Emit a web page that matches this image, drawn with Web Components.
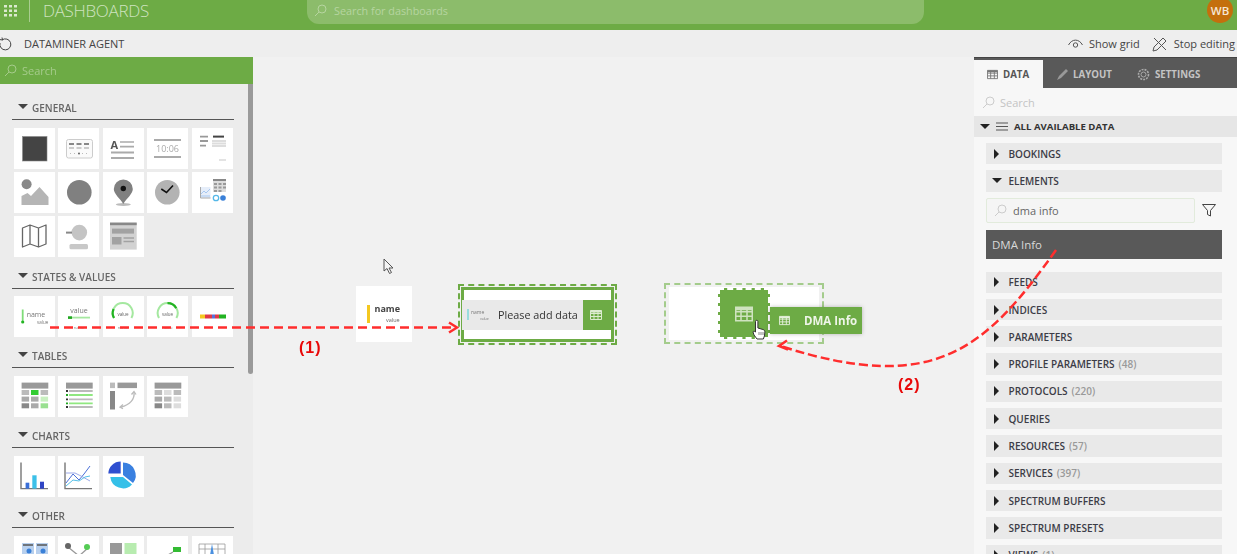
<!DOCTYPE html>
<html>
<head>
<meta charset="utf-8">
<title>Dashboards</title>
<style>
  html, body { margin: 0; padding: 0; height: 100%; overflow: hidden; }
  body { font-family: "Open Sans", "Noto Sans", sans-serif; color: #444; background: #f1f1f1; }
</style>
</head>
<body>
<dash-app>
  <dash-topbar slot="top"></dash-topbar>
  <dash-toolbar slot="tools"></dash-toolbar>
  <dash-palette slot="left">
    <palette-section heading="GENERAL">
      <palette-tile><svg viewBox="0 0 41 41"><rect x="8.5" y="8.5" width="24.5" height="24.5" fill="#444" stroke="#888" stroke-width=".6"/></svg></palette-tile>
      <palette-tile><svg viewBox="0 0 41 41"><rect x="8.5" y="11.5" width="26" height="18.5" rx="2" fill="#fafafa" stroke="#ccc"/><path d="M11 16h5M18.500 16h5M26 16h5" stroke="#888" stroke-width="2"/><path d="M11 20h5M18.500 20h5M26 20h5" stroke="#ccc" stroke-width="2"/><path d="M12 25.500h19" stroke="#bbb" stroke-dasharray="1 3"/><circle cx="21" cy="25.500" r="1" fill="#666"/></svg></palette-tile>
      <palette-tile><svg viewBox="0 0 41 41"><text x="7.500" y="21" font-family="Open Sans" font-size="11" font-weight="700" fill="#555">A</text><path d="M17 14h14M17 18.600h14" stroke="#aaa" stroke-width="1.600"/><path d="M8 24.600h23M8 30h23" stroke="#aaa" stroke-width="2"/></svg></palette-tile>
      <palette-tile><svg viewBox="0 0 41 41"><path d="M7 12h27M7 29h27" stroke="#aaa" stroke-width="2"/><text x="20.500" y="24" text-anchor="middle" font-family="Open Sans" font-size="9" fill="#aaa">10:06</text></svg></palette-tile>
      <palette-tile><svg viewBox="0 0 41 41"><path d="M8 8.600h8M8 13h8M8 17.600h6" stroke="#999" stroke-width="1.800"/><path d="M21 8.600h11" stroke="#444" stroke-width="2"/><path d="M20 13h14M20 15.500h14M20 18h14" stroke="#ddd" stroke-width="1.800"/><path d="M27 32h7" stroke="#ddd" stroke-width="1.600"/></svg></palette-tile>
      <palette-tile><svg viewBox="0 0 41 41"><circle cx="12.600" cy="12.300" r="5" fill="#888"/><path d="M7.500 33V24l6-3 3.500 3 8.500-9 9 10v8z" fill="#b5b5b5"/></svg></palette-tile>
      <palette-tile><svg viewBox="0 0 41 41"><circle cx="21.300" cy="20.300" r="12.300" fill="#808080"/></svg></palette-tile>
      <palette-tile><svg viewBox="0 0 41 41"><ellipse cx="20.300" cy="32.500" rx="7.500" ry="1.500" fill="#bbb"/><path d="M20.300 7.500a9.500 9.500 0 0 1 9.500 9.500c0 5-6 9-9.500 15-3.500-6-9.500-10-9.500-15a9.500 9.500 0 0 1 9.500-9.500z" fill="#808080"/><circle cx="20.300" cy="16.500" r="2.700" fill="#111"/></svg></palette-tile>
      <palette-tile><svg viewBox="0 0 41 41"><circle cx="20.300" cy="20.300" r="12.300" fill="#b3b3b3"/><path d="M14.300 17l5.200 3.500 6.500-7" fill="none" stroke="#111" stroke-width="1.600"/></svg></palette-tile>
      <palette-tile><svg viewBox="0 0 41 41"><rect x="8.500" y="15" width="10" height="11" fill="#e6eefa"/><rect x="21" y="7" width="13" height="13" fill="#ddd"/><path d="M21 8h13" stroke="#888" stroke-width="2"/><path d="M22 12h3M26.500 12h3M31 12h3M22 15.500h3M26.500 15.500h3M31 15.500h3M22 19h3M26.500 19h3" stroke="#999" stroke-width="2"/><path d="M8.500 15v11h10" fill="none" stroke="#aaa"/><path d="M9 22l3-3 2 2 4-4M9 24h9" fill="none" stroke="#a8c8f0"/><circle cx="24" cy="26" r="2.700" fill="none" stroke="#55b8e8" stroke-width="1.300"/><circle cx="31" cy="26" r="2.800" fill="#3a80d8"/></svg></palette-tile>
      <palette-tile><svg viewBox="0 0 41 41"><path d="M8.500 12l7.500-3 8.500 3 7.500-3v19l-7.500 3-8.500-3-7.500 3z M16 9v19M24.500 12v19" fill="#fff" stroke="#666" stroke-width="1.300" stroke-linejoin="round"/></svg></palette-tile>
      <palette-tile><svg viewBox="0 0 41 41"><circle cx="21.300" cy="16.600" r="7.800" fill="#c4c4c4"/><path d="M8 16.600h6" stroke="#888" stroke-width="2"/><rect x="11.500" y="28" width="18.500" height="5.200" rx="1.500" fill="#c8c8c8"/></svg></palette-tile>
      <palette-tile><svg viewBox="0 0 41 41"><rect x="7" y="6.600" width="26.700" height="27" fill="#d2d2d2"/><rect x="7" y="6.600" width="26.700" height="2.600" fill="#888"/><rect x="9" y="12.600" width="22" height="5" fill="#a2a2a2"/><rect x="9" y="21" width="9.500" height="7.500" fill="#a2a2a2"/><path d="M20.500 22h10.500M20.500 25.500h10.500" stroke="#a2a2a2" stroke-width="1.500"/></svg></palette-tile>
    </palette-section>
    <palette-section heading="STATES &amp; VALUES">
      <palette-tile><svg viewBox="0 0 41 41"><path d="M8.700 13.500v12" stroke="#7fdc78" stroke-width="1.800"/><circle cx="8.700" cy="26" r="1.600" fill="#22b322"/><text x="12.700" y="21" font-family="Open Sans" font-size="7" fill="#777">name</text><text x="23" y="27.500" font-family="Open Sans" font-size="4.500" fill="#777">value</text></svg></palette-tile>
      <palette-tile><svg viewBox="0 0 41 41"><text x="21" y="17" text-anchor="middle" font-family="Open Sans" font-size="7" fill="#777">value</text><path d="M10 21.600h22" stroke="#a5e8a0" stroke-width="1.800"/><path d="M10 21.600h4" stroke="#22a722" stroke-width="2.600"/><text x="21" y="33" text-anchor="middle" font-family="Open Sans" font-size="4" fill="#888">name</text></svg></palette-tile>
      <palette-tile><svg viewBox="0 0 41 41"><g transform="translate(0 -3.500)" fill="none"><path d="M11 25.500a10 10 0 1 1 17.400 0" stroke="#a5e8a0" stroke-width="2"/><path d="M11 25.500a10 10 0 0 1-.4-9" stroke="#22b322" stroke-width="2.200"/></g><text x="20" y="20" text-anchor="middle" font-family="Open Sans" font-size="4.500" fill="#666">value</text><text x="20" y="33" text-anchor="middle" font-family="Open Sans" font-size="4" fill="#888">name</text></svg></palette-tile>
      <palette-tile><svg viewBox="0 0 41 41"><g transform="translate(0 -3.500)" fill="none"><path d="M12 25.500a10 10 0 1 1 17.400 0" stroke="#a5e8a0" stroke-width="2"/><path d="M20.500 10.700a10 10 0 0 1 8.700 5" stroke="#22b322" stroke-width="2.200"/></g><text x="20.500" y="20" text-anchor="middle" font-family="Open Sans" font-size="4.500" fill="#666">value</text><text x="20.500" y="33" text-anchor="middle" font-family="Open Sans" font-size="4" fill="#888">name</text></svg></palette-tile>
      <palette-tile><svg viewBox="0 0 41 41"><rect x="8" y="18.500" width="5" height="4" fill="#f4c820"/><rect x="13" y="18.500" width="7" height="4" fill="#e03a48"/><rect x="20" y="18.500" width="3" height="4" fill="#5a70d8"/><rect x="23" y="18.500" width="4" height="4" fill="#e03a48"/><rect x="27" y="18.500" width="7" height="4" fill="#22b322"/></svg></palette-tile>
    </palette-section>
    <palette-section heading="TABLES">
      <palette-tile><svg viewBox="0 0 41 41"><rect x="7.600" y="6.600" width="26.700" height="6" fill="#999"/><g fill="#bbb"><rect x="7.600" y="14" width="7.500" height="5"/><rect x="17" y="14" width="7.500" height="5" fill="#33cc33"/><rect x="26.600" y="14" width="7.500" height="5"/><rect x="7.600" y="20.600" width="7.500" height="5" fill="#aaa"/><rect x="17" y="20.600" width="7.500" height="5" fill="#aaa"/><rect x="26.600" y="20.600" width="7.500" height="5" fill="#c8f0c0"/><rect x="7.600" y="27.300" width="7.500" height="5" fill="#888"/><rect x="17" y="27.300" width="7.500" height="5" fill="#aaa"/><rect x="26.600" y="27.300" width="7.500" height="5" fill="#99e090"/></g></svg></palette-tile>
      <palette-tile><svg viewBox="0 0 41 41"><rect x="8" y="6.600" width="26.700" height="6" fill="#999"/><path d="M11 15h23.700M11 23.300h23.700M11 31h23.700" stroke="#bbb" stroke-width="1.800"/><path d="M11 19h23.700M11 27.300h23.700" stroke="#90e880" stroke-width="1.800"/><path d="M8 15h2M8 23.300h2M8 31h2" stroke="#333" stroke-width="1.800"/><path d="M8 19h2M8 27.300h2" stroke="#22a722" stroke-width="1.800"/></svg></palette-tile>
      <palette-tile><svg viewBox="0 0 41 41"><rect x="7" y="6.600" width="5" height="5.500" fill="#bbb"/><rect x="14.500" y="6.600" width="19.500" height="5.500" fill="#999"/><rect x="7" y="15" width="5" height="18.500" fill="#888"/><path d="M31 16c1 7-4 13-13 15" fill="none" stroke="#bbb" stroke-width="1.300"/><path d="M28.500 18.500l2.500-3 2 3M20 28.500l-3 2.700 3 1.500" fill="none" stroke="#bbb" stroke-width="1.300"/></svg></palette-tile>
      <palette-tile><svg viewBox="0 0 41 41"><rect x="7.600" y="6.600" width="26.700" height="6" fill="#999"/><g fill="#bbb"><rect x="7.600" y="14" width="7.500" height="5"/><rect x="17" y="14" width="7.500" height="5" fill="#ddd"/><rect x="26.600" y="14" width="7.500" height="5"/><rect x="7.600" y="20.600" width="7.500" height="5" fill="#aaa"/><rect x="17" y="20.600" width="7.500" height="5"/><rect x="26.600" y="20.600" width="7.500" height="5" fill="#ddd"/><rect x="7.600" y="27.300" width="7.500" height="5" fill="#888"/><rect x="17" y="27.300" width="7.500" height="5"/><rect x="26.600" y="27.300" width="7.500" height="5" fill="#ddd"/></g></svg></palette-tile>
    </palette-section>
    <palette-section heading="CHARTS">
      <palette-tile><svg viewBox="0 0 41 41"><path d="M7 6.600v26h27" fill="none" stroke="#777" stroke-width="1.400"/><rect x="11.600" y="26.700" width="3.700" height="6" fill="#3a6fd8"/><rect x="18.300" y="19.300" width="4.300" height="13.300" fill="#3cc0e8"/><rect x="26" y="25.700" width="4" height="7" fill="#2f45c4"/></svg></palette-tile>
      <palette-tile><svg viewBox="0 0 41 41"><path d="M7 6.600v26h27" fill="none" stroke="#777" stroke-width="1.400"/><path d="M8 27l7-9 6 6 5-6 6-8" fill="none" stroke="#4a6fd8"/><path d="M8 17h9l6 3 9 5" fill="none" stroke="#9aa8e8"/><path d="M8 30l7-6 6 1 6-4 5-1" fill="none" stroke="#55c0e8"/></svg></palette-tile>
      <palette-tile><svg viewBox="0 0 41 41"><path d="M5.300 17.600a12.400 12.400 0 0 1 12.400-12v12z" fill="#2f4fd0"/><path d="M20 6.600a12.700 12.700 0 0 1 10 20.500l-10-8z" fill="#3a80e0"/><path d="M29 28.500a12.700 12.700 0 0 1-21.700-7.500h12.700z" fill="#35c0e8"/></svg></palette-tile>
    </palette-section>
    <palette-section heading="OTHER">
      <palette-tile><svg viewBox="0 0 41 41"><rect x="8" y="7" width="12" height="18" fill="#b8d0ee"/><rect x="22" y="7" width="12" height="18" fill="#b8d0ee"/><path d="M9 9h10M23 9h10" stroke="#555" stroke-width="1.500"/><circle cx="15" cy="15" r="2.500" fill="#3a80d8"/><circle cx="29" cy="15" r="2.500" fill="#3a80d8"/></svg></palette-tile>
      <palette-tile><svg viewBox="0 0 41 41"><path d="M10 11l11 9 9-8" fill="none" stroke="#999" stroke-width="1.300"/><circle cx="10" cy="10" r="3" fill="#666"/><circle cx="29" cy="11" r="3" fill="#55cc55"/></svg></palette-tile>
      <palette-tile><svg viewBox="0 0 41 41"><rect x="7" y="7" width="12" height="12" fill="#999"/><rect x="21.500" y="7" width="12" height="12" fill="#b8ecb0"/></svg></palette-tile>
      <palette-tile><svg viewBox="0 0 41 41"><rect x="26" y="11" width="8" height="5" fill="#33bb33"/><path d="M26 16l-5 3" stroke="#999" stroke-width="1.300"/></svg></palette-tile>
      <palette-tile><svg viewBox="0 0 41 41"><path d="M7 8h26M7 13h26M13 8v11M26 8v11M7 8v11M33 8v11" stroke="#999" stroke-width=".8" fill="none"/><path d="M18 19l2-11 2 11z" fill="#4a90e0"/></svg></palette-tile>
    </palette-section>
  </dash-palette>
  <dash-canvas slot="center"></dash-canvas>
  <dash-sidepanel slot="right">
    <data-row label="BOOKINGS"></data-row>
    <data-row label="ELEMENTS" open></data-row>
    <element-filter value="dma info"></element-filter>
    <data-row label="FEEDS"></data-row>
    <data-row label="INDICES"></data-row>
    <data-row label="PARAMETERS"></data-row>
    <data-row label="PROFILE PARAMETERS" count="(48)"></data-row>
    <data-row label="PROTOCOLS" count="(220)"></data-row>
    <data-row label="QUERIES"></data-row>
    <data-row label="RESOURCES" count="(57)"></data-row>
    <data-row label="SERVICES" count="(397)"></data-row>
    <data-row label="SPECTRUM BUFFERS"></data-row>
    <data-row label="SPECTRUM PRESETS"></data-row>
    <data-row label="VIEWS" count="(1)"></data-row>
  </dash-sidepanel>
  <flow-annotations slot="over"></flow-annotations>
</dash-app>

<script>
const GRID_ICON = `<svg width="14" height="14" viewBox="0 0 14 14" fill="#dbe9cf"><path d="M0 1h3v2.500H0zM5 1h3v2.500H5zM10 1h3v2.500h-3zM0 5.500h3V8H0zM5 5.500h3V8H5zM10 5.500h3V8h-3zM0 10h3v2.500H0zM5 10h3v2.500H5zM10 10h3v2.500h-3z"/></svg>`;
const LENS_ICON = color => `<svg width="13" height="13" viewBox="0 0 13 13" fill="none" stroke="${color}" stroke-width="1"><circle cx="8" cy="5" r="4"/><path d="M5 8l-4 4"/></svg>`;
const TABLE_ICON = (color, size) => `<svg width="${size}" height="${size}" viewBox="0 0 12 12" fill="none" stroke="${color}" stroke-width="1"><path d="M.5 1.500h11v9H.5z"/><path d="M.5 4.500h11M.5 7.500h11M4 1.500v9M8 1.500v9"/><path d="M.5 2.500h11" stroke-width="2"/></svg>`;

class DashApp extends HTMLElement {
    constructor() {
        super();
        this.attachShadow({ mode: "open" }).innerHTML = `
          <style>
            :host { display: block; position: relative; width: 1237px; height: 554px; overflow: hidden; filter: blur(.35px); }
            .main { display: flex; height: 497px; }
            .over { position: absolute; inset: 0; pointer-events: none; }
          </style>
          <slot name="top"></slot>
          <slot name="tools"></slot>
          <div class="main">
            <slot name="left"></slot>
            <slot name="center"></slot>
            <slot name="right"></slot>
          </div>
          <div class="over"><slot name="over"></slot></div>
        `;
    }
}

class DashTopbar extends HTMLElement {
    constructor() {
        super();
        this.attachShadow({ mode: "open" }).innerHTML = `
          <style>
            :host { display: flex; height: 30px; background: #6dab45; box-sizing: border-box; }
            .grid { width: 30px; height: 22px; padding-left: 4px; box-sizing: border-box; border-right: 1px solid #a9cd90; display: flex; align-items: center; }
            .title { width: 263px; padding-left: 13px; box-sizing: border-box; height: 22px; line-height: 21px; font-size: 17px; font-weight: 300; color: #cfe3c0; letter-spacing: -.3px; }
            .search { width: 617px; height: 24px; margin-left: 14px; border-radius: 0 0 12px 12px; background: #8cbc6b; display: flex; align-items: center; gap: 7px; padding: 0 0 4px 7px; box-sizing: border-box; font-size: 10.800px; color: #b6d5a0; }
            .avatar { margin: -3px 0 0 283px; width: 26px; height: 26px; border-radius: 50%; background: #c46f0c; color: #f5e6d5; font-size: 11.500px; font-weight: 600; display: flex; align-items: center; justify-content: center; }
          </style>
          <div class="grid">${GRID_ICON}</div>
          <div class="title">DASHBOARDS</div>
          <div class="search">${LENS_ICON("#b6d5a0")}<span>Search for dashboards</span></div>
          <div class="avatar">WB</div>
        `;
    }
}

class DashToolbar extends HTMLElement {
    constructor() {
        super();
        this.attachShadow({ mode: "open" }).innerHTML = `
          <style>
            :host { display: flex; align-items: center; height: 27px; background: #eee; font-size: 11px; color: #444; }
            .refresh { margin-left: -1px; width: 25px; display: flex; }
            .name { flex: 1; }
            .act { display: flex; align-items: center; gap: 6px; margin-right: 12px; }
            .act:last-child { margin-right: 2px; }
          </style>
          <span class="refresh"><svg width="13" height="14" viewBox="0 0 13 14" fill="none" stroke="#444" stroke-width="1"><path d="M3 3a5.500 5.500 0 1 1-2 3"/><path d="M.5 2.500L3.500 3 3 .5"/></svg></span>
          <span class="name">DATAMINER AGENT</span>
          <span class="act"><svg width="15" height="10" viewBox="0 0 15 10" fill="none" stroke="#555"><path d="M.5 6c3.500-6.500 10.500-6.500 14 0"/><circle cx="7.500" cy="6" r="2.200"/></svg>Show grid</span>
          <span class="act"><svg width="16" height="16" viewBox="0 0 16 16" fill="none" stroke="#555"><path d="M1 15l1-4 9-9 3 3-9 9z"/><path d="M2 2l12 12"/></svg>Stop editing</span>
        `;
    }
}

class DashPalette extends HTMLElement {
    constructor() {
        super();
        this.attachShadow({ mode: "open" }).innerHTML = `
          <style>
            :host { display: flex; flex-direction: column; width: 253px; flex: none; background: #ececec; position: relative; overflow: hidden; }
            .search { height: 27px; background: #6dab45; display: flex; align-items: center; gap: 5px; padding-left: 4px; font-size: 11px; color: #a5cb8b; flex: none; }
            .body { padding: 17px 0 0 12px; }
            .thumb { position: absolute; right: 0; top: 27px; width: 5px; height: 290px; background: #9a9a9a; border-radius: 0 0 3px 3px; }
          </style>
          <div class="search">${LENS_ICON("#a5cb8b")}<span>Search</span></div>
          <div class="body"><slot></slot></div>
          <div class="thumb"></div>
        `;
    }
}

class PaletteSection extends HTMLElement {
    constructor() {
        super();
        this.attachShadow({ mode: "open" }).innerHTML = `
          <style>
            :host { display: block; width: 222px; margin-bottom: 12.100px; }
            .head { display: flex; align-items: center; gap: 4px; height: 19px; box-sizing: border-box; padding: 0 0 4px 6px; border-bottom: 1px solid #555; font-size: 10px; font-weight: 600; color: #666; }
            .tri { width: 0; height: 0; border: 5px solid transparent; border-top: 5px solid #444; border-bottom: 0; margin-top: -3px; }
            .grid { display: grid; grid-template-columns: repeat(5, 41px); column-gap: 3.400px; row-gap: 3.400px; padding: 7.700px 0 0 2px; }
          </style>
          <div class="head"><span class="tri"></span><span class="label"></span></div>
          <div class="grid"><slot></slot></div>
        `;
        this.shadowRoot.querySelector(".label").textContent = this.getAttribute("heading");
    }
}

class PaletteTile extends HTMLElement {
    constructor() {
        super();
        this.attachShadow({ mode: "open" }).innerHTML = `
          <style>
            :host { display: block; width: 41px; height: 41px; background: #fff; }
            ::slotted(svg) { display: block; width: 41px; height: 41px; }
          </style>
          <slot></slot>
        `;
    }
}

class DashCanvas extends HTMLElement {
    constructor() {
        super();
        this.attachShadow({ mode: "open" }).innerHTML = `
          <style>
            :host { display: block; position: relative; flex: 1; background: #f1f1f1; }
            .item { position: absolute; box-sizing: border-box; }
            .pointer { left: 130px; top: 201px; }
            .tile { left: 103px; top: 229px; width: 56px; height: 56px; background: #fff; }
            .tile svg { display: block; }
            .drop { left: 205px; top: 227px; width: 159px; height: 61px; border: 2px dashed #6dab45; padding: 1px; }
            .frame { box-sizing: border-box; height: 100%; border: 3px solid #6dab45; background: #fff; display: flex; align-items: center; }
            .bar { flex: 1; height: 30px; margin: 0 -2px; background: #e9e9e9; display: flex; align-items: center; font-size: 10.800px; color: #333; }
            .bar svg { margin: 0 9px 0 5px; }
            .bar .txt { flex: 1; white-space: nowrap; }
            .bar .btn { width: 30px; height: 30px; background: #6dab45; display: flex; align-items: center; justify-content: center; }
            .target { left: 411px; top: 226px; width: 160px; height: 61px; border: 2px dashed #a4cc8c; padding: 2px 3px; }
            .target .fill { height: 100%; background: #fff; }
            .square { left: 465px; top: 231px; width: 52px; height: 51px; background: #6dab45; border: 2px dashed #fff; outline: 0; display: flex; align-items: center; justify-content: center; }
            .tip { left: 517px; top: 250px; width: 92px; height: 27px; background: #6dab45; box-shadow: 0 0 4px rgba(0,0,0,.25); display: flex; align-items: center; color: #eef5e8; font-size: 11.500px; font-weight: 700; padding-left: 9px; gap: 14px; }
            .hand { left: 499px; top: 262px; }
          </style>
          <svg class="item pointer" width="12" height="17" viewBox="0 0 12 17" fill="#f4f4f4" stroke="#555"><path d="M1 1v12l3-2.500 2.500 5 2-1-2.500-4.500H10z"/></svg>
          <div class="item tile"><svg width="56" height="56" viewBox="0 0 56 56"><path d="M12.500 19v18" stroke="#f4c820" stroke-width="3"/><text x="18.500" y="26" font-family="Open Sans" font-size="9" font-weight="700" fill="#444">name</text><text x="30" y="36" font-family="Open Sans" font-size="5.500" fill="#666">value</text></svg></div>
          <div class="item drop"><div class="frame"><div class="bar"><svg width="22" height="16" viewBox="0 0 22 16"><path d="M1 2v11" stroke="#7fd8d8" stroke-width="1.500"/><text x="4" y="7" font-family="Open Sans" font-size="5" fill="#777">name</text><text x="13" y="13" font-family="Open Sans" font-size="3.500" fill="#777">value</text></svg><span class="txt">Please add data</span><span class="btn">${TABLE_ICON("#dcebd0", 12)}</span></div></div></div>
          <div class="item target"><div class="fill"></div></div>
          <div class="item square">${TABLE_ICON("#cfe3c0", 18)}</div>
          <div class="item tip">${TABLE_ICON("#e5f0dc", 11)}<span>DMA Info</span></div>
          <svg class="item hand" width="14" height="21" viewBox="0 0 14 21" fill="#fff" stroke="#333" stroke-width="1"><path d="M3.500 12V2.500a1.200 1.200 0 0 1 2.400 0V9l5 1.500c1.500.5 2 1 2 2.500l-.5 4-1 3H5l-3-4-1-3c0-1 1.500-1 2.500 0z"/><path d="M7 13v3M9 13v3M11 13v3" stroke-width=".6"/></svg>
        `;
    }
}

class DashSidepanel extends HTMLElement {
    constructor() {
        super();
        this.attachShadow({ mode: "open" }).innerHTML = `
          <style>
            :host { display: block; width: 263px; flex: none; background: #f7f7f7; overflow: hidden; }
            .tabs { height: 31px; box-sizing: border-box; background: #595959; border-top: 1px solid #444; display: flex; align-items: flex-end; font-size: 9.700px; font-weight: 700; color: #c4c4c4; }
            .tab { height: 28px; display: flex; align-items: center; gap: 5px; padding-left: 13px; box-sizing: border-box; }
            .tab.on { width: 69px; background: #f7f7f7; color: #555; }
            .tab.l { width: 81px; gap: 3px; }
            .search { height: 28px; display: flex; align-items: center; gap: 5px; padding-left: 8px; font-size: 11px; color: #c4c4c4; }
            .all { height: 21px; background: #e6e6e6; display: flex; align-items: center; font-size: 9.600px; font-weight: 700; color: #333; padding-left: 6px; gap: 6px; }
            .tri { width: 0; height: 0; border: 5.500px solid transparent; border-top: 5.500px solid #222; border-bottom: 0; }
            .list { padding: 6px 15px 0 12px; display: flex; flex-direction: column; gap: 6px; }
          </style>
          <div class="tabs">
            <div class="tab on">${TABLE_ICON("#777", 11)}DATA</div>
            <div class="tab l"><svg width="14" height="14" viewBox="0 0 14 14"><path d="M1 13l2-4 7-7 2 2-7 7z" fill="#999"/></svg>LAYOUT</div>
            <div class="tab"><svg width="13" height="13" viewBox="0 0 13 13" fill="none" stroke="#aaa"><circle cx="6.500" cy="6.500" r="2.500"/><circle cx="6.500" cy="6.500" r="5" stroke-width="1.600" stroke-dasharray="2 1"/></svg>SETTINGS</div>
          </div>
          <div class="search">${LENS_ICON("#ccc")}<span>Search</span></div>
          <div class="all"><span class="tri"></span><svg width="12" height="9" viewBox="0 0 12 9" stroke="#555"><path d="M0 1h12M0 4.500h12M0 8h12"/></svg><span>ALL AVAILABLE DATA</span></div>
          <div class="list"><slot></slot></div>
        `;
    }
}

class DataRow extends HTMLElement {
    constructor() {
        super();
        this.attachShadow({ mode: "open" }).innerHTML = `
          <style>
            :host { display: flex; align-items: center; height: 21.300px; flex: none; background: #e9e9e9; font-size: 10px; font-weight: 600; color: #3c3c46; padding-left: 7.500px; }
            .arrow { width: 15px; display: flex; }
            .right { width: 0; height: 0; border: 5px solid transparent; border-left: 5.500px solid #222; border-right: 0; }
            .down { width: 0; height: 0; border: 5.500px solid transparent; border-top: 5px solid #222; border-bottom: 0; margin-left: -2px; }
            .count { color: #999; margin-left: 4px; }
          </style>
          <span class="arrow"><span class="${this.hasAttribute("open") ? "down" : "right"}"></span></span>
          <span class="label"></span>
          <span class="count"></span>
        `;
        this.shadowRoot.querySelector(".label").textContent = this.getAttribute("label");
        this.shadowRoot.querySelector(".count").textContent = this.getAttribute("count") || "";
    }
}

class ElementFilter extends HTMLElement {
    constructor() {
        super();
        this.attachShadow({ mode: "open" }).innerHTML = `
          <style>
            :host { display: block; flex: none; margin-bottom: 7px; }
            .top { display: flex; align-items: center; gap: 7px; margin-bottom: 7px; }
            .box { width: 209px; height: 25px; box-sizing: border-box; border: 1px solid #e2ebdc; border-radius: 2px; background: #f5f5f5; display: flex; align-items: center; gap: 6px; padding-left: 7px; font-size: 11px; color: #666; }
            .hit { height: 29px; background: #595959; color: #d8d8d8; display: flex; align-items: center; padding-left: 6px; font-size: 11.500px; }
          </style>
          <div class="top">
            <div class="box">${LENS_ICON("#ccc")}<span class="val"></span></div>
            <svg width="14" height="13" viewBox="0 0 14 13" fill="none" stroke="#444"><path d="M.5 .5h13L8.500 6.500V12l-3-1.500v-4z"/></svg>
          </div>
          <div class="hit">DMA Info</div>
        `;
        this.shadowRoot.querySelector(".val").textContent = this.getAttribute("value");
    }
}

class FlowAnnotations extends HTMLElement {
    constructor() {
        super();
        this.attachShadow({ mode: "open" }).innerHTML = `
          <style>
            :host { display: block; width: 100%; height: 100%; }
            svg { display: block; }
            text { font-family: "Liberation Sans", sans-serif; font-size: 16px; font-weight: 700; letter-spacing: 1px; fill: #e80808; }
          </style>
          <svg width="1237" height="554" fill="none" stroke="#ff2d2d" stroke-width="2">
            <path d="M50 327.500H452" stroke-width="2.500" stroke-dasharray="9 5"/>
            <path d="M449 322.500l8 5-8 5" stroke-width="2.500"/>
            <path d="M1056 250C985 350 934 395 782 346.500" stroke-width="2.500" stroke-dasharray="9 4"/>
            <path d="M787 340.500l-8 5.500 9 3.500" stroke-width="2.500"/>
            <text x="299" y="353" stroke="none">(1)</text>
            <text x="898" y="390" stroke="none">(2)</text>
          </svg>
        `;
    }
}

customElements.define("dash-app", DashApp);
customElements.define("dash-topbar", DashTopbar);
customElements.define("dash-toolbar", DashToolbar);
customElements.define("dash-palette", DashPalette);
customElements.define("palette-section", PaletteSection);
customElements.define("palette-tile", PaletteTile);
customElements.define("dash-canvas", DashCanvas);
customElements.define("dash-sidepanel", DashSidepanel);
customElements.define("data-row", DataRow);
customElements.define("element-filter", ElementFilter);
customElements.define("flow-annotations", FlowAnnotations);
</script>
</body>
</html>
